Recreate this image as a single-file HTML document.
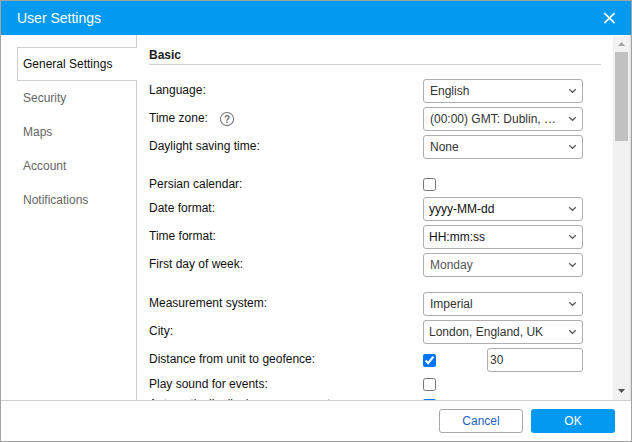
<!DOCTYPE html>
<html><head><meta charset="utf-8">
<style>
*{box-sizing:border-box}
html,body{margin:0;padding:0;width:632px;height:442px;overflow:hidden;background:#fff;font-family:"Liberation Sans",sans-serif;}
.a{position:absolute}
#dlg{position:absolute;left:0;top:0;width:632px;height:442px;border:1px solid #a3a3a3;background:#fff}
#hdr{position:absolute;left:1px;top:1px;width:630px;height:34px;background:#029af0}
#title{left:17px;top:10px;font-size:14px;line-height:16px;color:#fff;white-space:nowrap}
.tab{left:23px;font-size:12px;line-height:14px;color:#666;white-space:nowrap}
.lbl{left:149px;font-size:12px;line-height:14px;color:#111;white-space:nowrap}
.sel{left:423px;width:160px;height:24px;border:1px solid #aeaeae;border-radius:3px;background:#fff}
.sel span{position:absolute;left:6px;top:4px;font-size:12px;line-height:14px;color:#333;white-space:nowrap}
.sel svg{position:absolute;left:144px;top:8px}
.cb{left:423px;margin:0;width:13px;height:13px}
.vl{background:#cecece}
</style></head>
<body>
<div id="dlg"></div>
<div id="hdr"></div>
<div class="a" id="title">User Settings</div>
<svg class="a" style="left:600px;top:9px" width="18" height="18" viewBox="0 0 18 18"><path d="M4.3 4.1L14.6 14.1M14.6 4.1L4.3 14.1" stroke="#fff" stroke-width="1.55" fill="none"/></svg>

<!-- tabs -->
<div class="a vl" style="left:136px;top:35px;width:1px;height:13px"></div>
<div class="a vl" style="left:17px;top:47px;width:120px;height:1px"></div>
<div class="a vl" style="left:17px;top:47px;width:1px;height:34px"></div>
<div class="a vl" style="left:17px;top:80px;width:120px;height:1px"></div>
<div class="a vl" style="left:136px;top:80px;width:1px;height:320px"></div>
<div class="a tab" style="top:57px;color:#111">General Settings</div>
<div class="a tab" style="top:91px">Security</div>
<div class="a tab" style="top:125px">Maps</div>
<div class="a tab" style="top:159px">Account</div>
<div class="a tab" style="top:193px">Notifications</div>

<!-- content -->
<div class="a" style="left:149px;top:48px;font-size:12px;line-height:14px;font-weight:bold;color:#222">Basic</div>
<div class="a vl" style="left:149px;top:64px;width:452px;height:1px"></div>

<div class="a lbl" style="top:83px">Language:</div>
<div class="a lbl" style="top:111px">Time zone:</div>
<svg class="a" style="left:219px;top:111px" width="16" height="16" viewBox="0 0 16 16"><circle cx="8" cy="8" r="6.6" stroke="#7a7a7a" stroke-width="1.05" fill="none"/><text x="8" y="11.6" text-anchor="middle" font-size="10" font-weight="bold" font-family="Liberation Sans" fill="#6e6e6e">?</text></svg>
<div class="a lbl" style="top:139px">Daylight saving time:</div>
<div class="a lbl" style="top:177px">Persian calendar:</div>
<div class="a lbl" style="top:201px">Date format:</div>
<div class="a lbl" style="top:229px">Time format:</div>
<div class="a lbl" style="top:257px">First day of week:</div>
<div class="a lbl" style="top:296px">Measurement system:</div>
<div class="a lbl" style="top:324px">City:</div>
<div class="a lbl" style="top:352px">Distance from unit to geofence:</div>
<div class="a lbl" style="top:377px">Play sound for events:</div>
<div class="a lbl" style="top:397px">Automatically display popup events:</div>

<div class="a sel" style="top:79px"><span>English</span><svg width="9" height="6" viewBox="0 0 9 6"><path d="M1.2 1.2L4.5 4.3L7.8 1.2" stroke="#5a5a5a" stroke-width="1.25" fill="none"/></svg></div>
<div class="a sel" style="top:107px"><span>(00:00) GMT: Dublin, &hellip;</span><svg width="9" height="6" viewBox="0 0 9 6"><path d="M1.2 1.2L4.5 4.3L7.8 1.2" stroke="#5a5a5a" stroke-width="1.25" fill="none"/></svg></div>
<div class="a sel" style="top:135px"><span>None</span><svg width="9" height="6" viewBox="0 0 9 6"><path d="M1.2 1.2L4.5 4.3L7.8 1.2" stroke="#5a5a5a" stroke-width="1.25" fill="none"/></svg></div>
<input type="checkbox" class="a cb" style="top:178px">
<div class="a sel" style="top:197px"><span style="left:5px;color:#111">yyyy-MM-dd</span><svg width="9" height="6" viewBox="0 0 9 6"><path d="M1.2 1.2L4.5 4.3L7.8 1.2" stroke="#5a5a5a" stroke-width="1.25" fill="none"/></svg></div>
<div class="a sel" style="top:225px"><span style="left:5px;color:#111">HH:mm:ss</span><svg width="9" height="6" viewBox="0 0 9 6"><path d="M1.2 1.2L4.5 4.3L7.8 1.2" stroke="#5a5a5a" stroke-width="1.25" fill="none"/></svg></div>
<div class="a sel" style="top:253px"><span style="color:#555">Monday</span><svg width="9" height="6" viewBox="0 0 9 6"><path d="M1.2 1.2L4.5 4.3L7.8 1.2" stroke="#5a5a5a" stroke-width="1.25" fill="none"/></svg></div>
<div class="a sel" style="top:292px"><span>Imperial</span><svg width="9" height="6" viewBox="0 0 9 6"><path d="M1.2 1.2L4.5 4.3L7.8 1.2" stroke="#5a5a5a" stroke-width="1.25" fill="none"/></svg></div>
<div class="a sel" style="top:320px"><span style="left:5px">London, England, UK</span><svg width="9" height="6" viewBox="0 0 9 6"><path d="M1.2 1.2L4.5 4.3L7.8 1.2" stroke="#5a5a5a" stroke-width="1.25" fill="none"/></svg></div>
<input type="checkbox" checked class="a cb" style="top:354px">
<div class="a sel" style="left:487px;width:96px;top:348px"><span style="left:2px">30</span></div>
<input type="checkbox" class="a cb" style="top:378px">
<input type="checkbox" checked class="a cb" style="top:399px">

<!-- scrollbar -->
<div class="a" style="left:613px;top:36px;width:17px;height:364px;background:#f1f1f1"></div>
<div class="a" style="left:630px;top:35px;width:1px;height:365px;background:#dcdcdc"></div>
<div class="a" style="left:615px;top:52px;width:13px;height:89px;background:#c1c1c1"></div>
<svg class="a" style="left:613px;top:36px" width="17" height="364"><polygon points="5,10 8.5,6 12,10" fill="#a3a3a3"/><polygon points="5,353 12,353 8.5,357" fill="#505050"/></svg>

<!-- footer -->
<div class="a" style="left:1px;top:400px;width:630px;height:41px;background:#fff"></div>
<div class="a vl" style="left:1px;top:400px;width:630px;height:1px"></div>
<div class="a" style="left:439px;top:409px;width:84px;height:24px;border:1px solid #a8a8a8;border-radius:3px;background:#fff;color:#1d5fc2;font-size:12px;line-height:22px;text-align:center">Cancel</div>
<div class="a" style="left:531px;top:409px;width:84px;height:24px;border-radius:3px;background:#029af0;color:#fff;font-size:12px;line-height:24px;text-align:center">OK</div>
</body></html>
